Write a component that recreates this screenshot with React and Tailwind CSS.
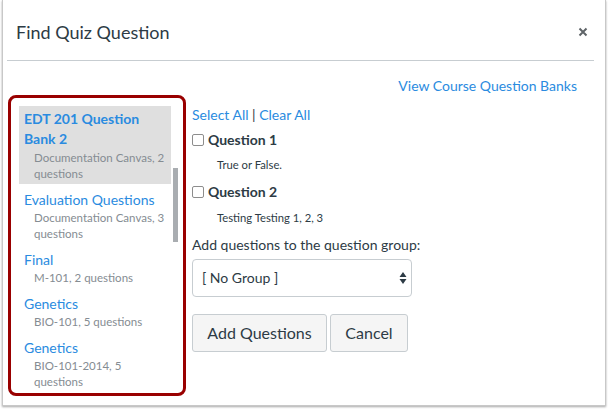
import React from "react";

const banks = [
  { title: "EDT 201 Question Bank 2", sub: "Documentation Canvas, 2 questions", selected: true },
  { title: "Evaluation Questions", sub: "Documentation Canvas, 3 questions" },
  { title: "Final", sub: "M-101, 2 questions" },
  { title: "Genetics", sub: "BIO-101, 5 questions" },
  { title: "Genetics", sub: "BIO-101-2014, 5 questions" },
];

function Check() {
  return <span className="inline-block w-[12px] h-[12px] border border-[#8d8d8d] rounded-[2px] bg-white shrink-0" />;
}

export default function App() {
  return (
    <div className="w-[608px] h-[409px] bg-white overflow-hidden font-['Lato','Noto_Sans',sans-serif] text-[#2d3b45]">
      <div className="ml-[2px] w-[604px] h-[406px] bg-white border-x border-b border-[#c8c8c8] shadow-[0_1px_2px_rgba(0,0,0,0.35)] flex flex-col">
        {/* header */}
        <div className="ml-[4px] w-[587px] h-[61px] border-b border-[#c7cdd1] flex items-center justify-between pl-[9px] pr-[6px] pt-[3px]">
          <span className="text-[18px] leading-[24px]">Find Quiz Question</span>
          <svg width="10" height="10" viewBox="0 0 10 10" className="mt-[1px]">
            <path d="M1.5 1.5 L8.5 8.5 M8.5 1.5 L1.5 8.5" stroke="#5f6468" strokeWidth="2" strokeLinecap="butt" />
          </svg>
        </div>
        {/* body */}
        <div className="pt-[15px] flex flex-col">
          <div className="h-[19px] leading-[20px] text-right pr-[28px] text-[14px] text-[#2a8be0]">
            View Course Question Banks
          </div>
          <div className="flex ml-[5px]">
            {/* bank list */}
            <div className="w-[178px] h-[301px] border-[3px] border-[#990000] rounded-[8px] pt-[8px] pl-[8px] flex overflow-hidden">
              <div className="w-[152px] flex flex-col">
                {banks.map((b, i) => (
                  <div
                    key={i}
                    className={
                      "pl-[5px] pr-[5px] pt-[3px] pb-[2px] mb-[3px] " +
                      (b.selected ? "bg-[#dfdfdf]" : "")
                    }
                  >
                    <div
                      className={
                        "text-[14px] leading-[20px] text-[#2a8be0] " +
                        (b.selected ? "font-bold" : "")
                      }
                    >
                      {b.title}
                    </div>
                    <div
                      className={
                        "pl-[10px] text-[11.5px] leading-[16px] text-[#858c92] " +
                        (b.selected ? "mt-[1px]" : "")
                      }
                    >
                      {b.sub}
                    </div>
                  </div>
                ))}
              </div>
              <div className="ml-[2px] w-[5px]">
                <div className="mt-[62px] h-[74px] w-[5px] bg-[#a9adb1]" />
              </div>
            </div>
            {/* right column */}
            <div className="ml-[6px] pt-[10px] flex flex-col">
              <div className="text-[14px] leading-[20px] text-[#2a8be0]">
                Select All <span className="text-[#2d3b45]">|</span> Clear All
              </div>
              <div className="mt-[5px] flex items-center h-[20px]">
                <Check />
                <span className="ml-[4px] text-[14px] font-bold leading-[20px]">Question 1</span>
              </div>
              <div className="pl-[25px] mt-[7px] text-[11.25px] leading-[16px]">True or False.</div>
              <div className="mt-[9px] flex items-center h-[20px]">
                <Check />
                <span className="ml-[4px] text-[14px] font-bold leading-[20px]">Question 2</span>
              </div>
              <div className="pl-[25px] mt-[8px] text-[11.25px] leading-[16px]">Testing Testing 1, 2, 3</div>
              <div className="mt-[9px] text-[14px] leading-[20px]">Add questions to the question group:</div>
              <div className="mt-[4px] w-[220px] h-[38px] border border-[#c7cdd1] rounded-[4px] flex items-center justify-between pl-[9px] pr-[4px] bg-white">
                <span className="text-[14px] leading-[20px]">[ No Group ]</span>
                <svg width="8" height="14" viewBox="0 0 8 14">
                  <path d="M4 1 L7.5 6 L0.5 6 Z M4 13 L7.5 8 L0.5 8 Z" fill="#2d3b45" />
                </svg>
              </div>
              <div className="mt-[17px] flex gap-[3px]">
                <div className="w-[135px] h-[38px] border border-[#c7cdd1] rounded-[3px] bg-[#f5f5f5] flex items-center justify-center text-[16px]">
                  Add Questions
                </div>
                <div className="w-[78px] h-[38px] border border-[#c7cdd1] rounded-[3px] bg-[#f5f5f5] flex items-center justify-center text-[16px]">
                  Cancel
                </div>
              </div>
            </div>
          </div>
        </div>
      </div>
    </div>
  );
}
